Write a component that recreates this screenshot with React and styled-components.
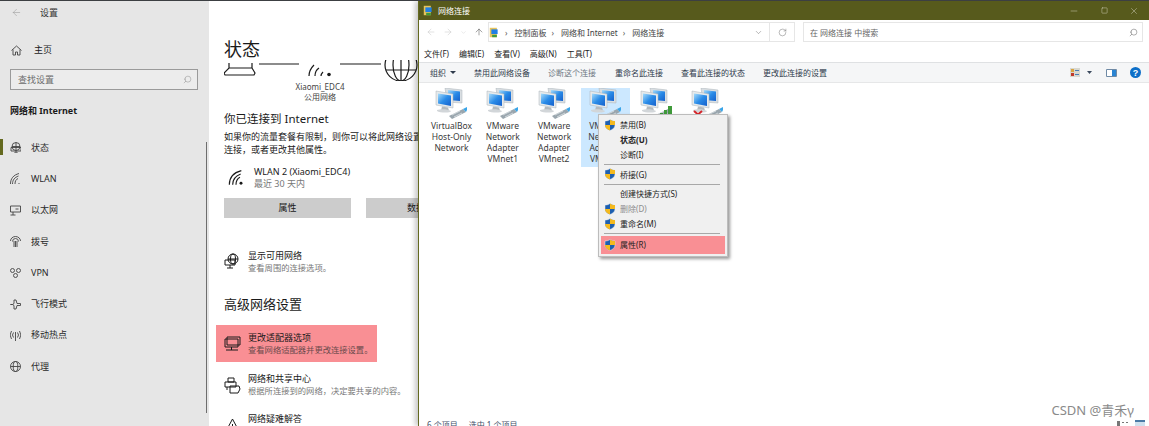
import styled, { createGlobalStyle } from "styled-components"
import { ArrowLeft, ArrowRight, ArrowUp, ChevronDown, Minus, RotateCw, Search, Square, X } from "lucide-react"

const cjk = `"Noto Sans", "Noto Sans CJK SC", sans-serif`

const Global = createGlobalStyle`
  html, body { margin: 0; padding: 0; background: #fff; }
  body { font-family: ${cjk}; overflow: hidden; }
  * { box-sizing: border-box; }
`

const Page = styled.div`
  display: flex;
  width: 1149px;
  height: 426px;
  overflow: hidden;
  border-top: 1px solid #3c3f42;
  color: #1a1a1a;
`

/* settings window, left part */
const Sidebar = styled.aside`
  position: relative;
  flex: 0 0 209px;
  background: #e6e6e6;
  font-size: 9px;
  line-height: 12px;
`

const BackRow = styled.div`
  display: flex;
  align-items: center;
  gap: 18px;
  height: 23px;
  padding-left: 11px;
  color: #333;
`

const HomeRow = styled.div`
  display: flex;
  align-items: center;
  gap: 12px;
  height: 20px;
  margin-top: 16px;
  padding-left: 11px;
`

const SearchBox = styled.div`
  display: flex;
  align-items: center;
  justify-content: space-between;
  width: 188px;
  height: 21px;
  margin: 9px 0 0 10px;
  padding: 0 5px 0 7px;
  border: 1px solid #9a9a9a;
  color: #6d6d6d;
  background: #ececec;
`

const GroupTitle = styled.div`
  margin: 15px 0 14px 10px;
  font-weight: 700;
  height: 13px;
`

const NavItem = styled.div`
  position: relative;
  display: flex;
  align-items: center;
  gap: 10px;
  height: 31.3px;
  padding-left: 10px;
  color: #2a2a2a;
  &::before {
    content: "";
    display: ${(p) => (p.$active ? "block" : "none")};
    position: absolute;
    left: 0;
    top: 7px;
    width: 3px;
    height: 16px;
    background: #64691f;
  }
`

const NavIcon = styled.svg`
  width: 11px;
  height: 11px;
  fill: none;
  stroke: #444;
  stroke-width: 0.9;
  flex: none;
`

const ScrollTrack = styled.div`
  position: absolute;
  right: 2px;
  top: 141px;
  width: 1px;
  height: 271px;
  background: #6e6e6e;
`

/* settings window, content */
const Content = styled.main`
  flex: 0 0 209px;
  padding-left: 15px;
  overflow: hidden;
  white-space: nowrap;
  font-size: 9px;
  line-height: 12px;
`

const Title = styled.h1`
  margin: 36px 0 0;
  height: 23px;
  font-size: 18px;
  line-height: 25px;
  font-weight: 400;
`

const Diagram = styled.svg`
  display: block;
  width: 194px;
  height: 21px;
  fill: none;
  stroke: #1a1a1a;
  stroke-width: 1.2;
`

const DiagramLabel = styled.div`
  width: 192px;
  text-align: center;
  font-size: 8px;
  line-height: 10px;
  color: #444;
  margin-top: ${(p) => p.$top || 0}px;
`

const ConnectedTitle = styled.h2`
  margin: 9px 0 0;
  font-size: 11.5px;
  line-height: 16px;
  font-weight: 400;
`

const Paragraph = styled.p`
  margin: 3px 0 0;
  font-size: 9px;
  line-height: 13px;
`

const NetRow = styled.div`
  display: flex;
  gap: 10px;
  margin: 9px 0 0 4px;
  height: 26px;
  align-items: center;
`

const Stack = styled.div`
  display: flex;
  flex-direction: column;
  line-height: 12px;
`

const Muted = styled.span`
  color: ${(p) => (p.$marked ? "#6b4a4c" : "#777")};
  font-size: ${(p) => (p.$small ? 8.3 : 9)}px;
`

const Buttons = styled.div`
  display: flex;
  gap: 15px;
  margin-top: 7px;
`

const GreyButton = styled.div`
  flex: none;
  width: 127px;
  height: 20px;
  line-height: 20px;
  text-align: center;
  background: #cccccc;
`

const LinkRow = styled.div`
  display: flex;
  align-items: center;
  gap: 7px;
  height: 37px;
  margin: ${(p) => p.$margin || "0"};
  padding-left: ${(p) => (p.$marked ? 8 : 0)}px;
  width: ${(p) => (p.$marked ? "161px" : "auto")};
  background: ${(p) => (p.$marked ? "#f98f94" : "transparent")};
`

const SectionTitle = styled.h2`
  margin: 15px 0 0;
  font-size: 13px;
  line-height: 18px;
  font-weight: 400;
`

const LinkIcon = styled.svg`
  width: 17px;
  height: 17px;
  fill: none;
  stroke: #1a1a1a;
  stroke-width: 1;
  flex: none;
`

/* explorer window */
const Explorer = styled.section`
  position: relative;
  flex: 1;
  display: flex;
  flex-direction: column;
  min-width: 0;
  background: #fff;
  border-left: 1px solid #64691f;
  box-shadow: -3px 0 5px rgba(0, 0, 0, 0.22);
  font-size: 8px;
  line-height: 11px;
`

const TitleBar = styled.header`
  display: flex;
  align-items: center;
  flex: none;
  height: 19px;
  padding-left: 4px;
  gap: 4px;
  color: #fff;
  background: #575a1c;
`

const WindowControls = styled.div`
  display: flex;
  align-items: center;
  margin-left: auto;
  color: #e8e8d8;
`

const WindowControl = styled.span`
  display: flex;
  justify-content: center;
  width: 30px;
`

const AddressRow = styled.div`
  display: flex;
  align-items: center;
  flex: none;
  height: 24px;
  padding: 2px 7px 2px 5px;
`

const NavArrows = styled.div`
  display: flex;
  align-items: center;
  flex: none;
  gap: 7px;
  width: 64px;
  padding-left: 2px;
  color: #c4c4c4;
`

const AddressBox = styled.div`
  display: flex;
  align-items: center;
  gap: 5px;
  flex: none;
  width: 282px;
  height: 20px;
  padding: 0 6px 0 0;
  border: 1px solid #e6e6e6;
  color: #444;
`

const Crumb = styled.span`
  &::before {
    content: "›";
    margin-right: 7px;
    color: #555;
  }
`

const RefreshBox = styled.div`
  display: flex;
  align-items: center;
  justify-content: center;
  flex: none;
  width: 25px;
  height: 20px;
  border: 1px solid #e6e6e6;
  border-left: 0;
  color: #666;
`

const SearchField = styled.div`
  display: flex;
  align-items: center;
  justify-content: space-between;
  flex: none;
  width: 340px;
  height: 20px;
  margin-left: 8px;
  padding: 0 4px 0 6px;
  border: 1px solid #e6e6e6;
  color: #666;
`

const MenuBar = styled.nav`
  display: flex;
  align-items: center;
  gap: 10px;
  flex: none;
  height: 18px;
  padding-left: 5px;
  color: #222;
`

const Toolbar = styled.div`
  display: flex;
  align-items: center;
  flex: none;
  height: 21px;
  padding-left: 11px;
  background: #f5f6f7;
  border-top: 1px solid #dfe1e3;
  border-bottom: 1px solid #e6e7e8;
  color: #2f3b4c;
`

const ToolItem = styled.span`
  display: flex;
  align-items: center;
  gap: 4px;
  width: ${(p) => p.$w}px;
  color: ${(p) => (p.$dim ? "#6d7683" : "#2f3b4c")};
`

const ToolIcons = styled.div`
  display: flex;
  align-items: center;
  gap: 13.5px;
  margin-left: auto;
  padding-right: 8px;
`

const IconGrid = styled.div`
  flex: 1;
  display: flex;
  align-items: flex-start;
  padding: 5px 0 0 8px;
  min-height: 0;
`

const FileItem = styled.div`
  flex: none;
  width: 49px;
  height: 79px;
  margin-right: 2.3px;
  text-align: center;
  font-size: 8.5px;
  line-height: 11px;
  color: #3a3a3a;
  background: ${(p) => (p.$selected ? "#cce8ff" : "transparent")};
`

const FileIcon = styled.svg`
  display: block;
  width: 33px;
  height: 32px;
  margin: 0 auto;
`

const StatusBar = styled.footer`
  flex: none;
  display: flex;
  gap: 11px;
  height: 6px;
  padding-left: 8px;
  color: #44506a;
  line-height: 10px;
  overflow: hidden;
`

const ContextMenu = styled.ul`
  position: absolute;
  left: 179px;
  top: 113px;
  width: 130px;
  margin: 0;
  padding: 2px;
  list-style: none;
  background: #f0f0f0;
  border: 1px solid #bcbcbc;
  box-shadow: 2px 2px 3px rgba(0, 0, 0, 0.4);
  color: #222;
`

const MenuEntry = styled.li`
  display: flex;
  align-items: center;
  gap: 4px;
  height: ${(p) => (p.$marked ? 18 : 15)}px;
  padding-left: 3px;
  font-weight: ${(p) => (p.$bold ? 700 : 400)};
  color: ${(p) => (p.$off ? "#8d8d8d" : "#222")};
  background: ${(p) => (p.$marked ? "#f98f94" : "transparent")};
`

const ShieldSlot = styled.span`
  flex: none;
  display: flex;
  width: 12px;
  height: 12px;
`

const MenuRule = styled.li`
  height: 1px;
  margin: 2px 5px 1.5px 3px;
  background: #a8a8a8;
`

const Watermark = styled.div`
  position: absolute;
  right: 15px;
  bottom: 8px;
  font-size: 13px;
  line-height: 16px;
  color: #8a8a8a;
`

const TrayGlyphs = styled.svg`
  position: absolute;
  right: 4px;
  bottom: 0;
  width: 28px;
  height: 6px;
`

function Wifi({ size = 16 }) {
  return (
    <svg width={size} height={size} viewBox="0 0 24 24" fill="none" stroke="#1a1a1a" strokeWidth="1.7">
      <circle cx="19.5" cy="20" r="2.2" fill="#1a1a1a" stroke="none" />
      <path d="M12 22C12 17 14 13 18 11" />
      <path d="M7 22C7 14 11 9 19 6" />
      <path d="M2 22C2 11 8 4 20 1" />
    </svg>
  )
}

const navIcons = {
  status: (
    <>
      <circle cx="6" cy="4.5" r="4" />
      <path d="M2 4.500h8M6 .5v8M1 5.500h10v3.500H1zM6 9v2M4 11h4" />
    </>
  ),
  wlan: <path d="M5 11C5 8 6 6.500 8 5.500M2.500 11C2.500 7 4.500 4.500 8.500 3M.5 11C.5 5.500 3.500 2 9 .5M8.500 10.500h1" />,
  ethernet: <path d="M.5 1h10v6H.5zM3 7v3M.5 10h5M5.500 4h3" />,
  dial: <path d="M.5 5a5 4.500 0 0 1 10 0M2.500 5.500a3 3 0 0 1 6 0M4 5v6M5.500 5v6M7 5v6" />,
  vpn: (
    <>
      <circle cx="2.500" cy="3.500" r="2" />
      <circle cx="8.500" cy="3.500" r="2" />
      <circle cx="5.500" cy="8.500" r="2" />
    </>
  ),
  plane: <path d="M.5 5.500h2l1.500-1V1h2l1 3.500h3.500v2H7l-1 3.500H4V6.500l-1.500-1z" />,
  hotspot: <path d="M5.500 2v9M3.500 2.500a4 4 0 0 0 0 5M7.500 2.500a4 4 0 0 1 0 5M1.500 1a7 7 0 0 0 0 8M9.500 1a7 7 0 0 1 0 8" />,
  proxy: (
    <>
      <circle cx="5.500" cy="5.500" r="5" />
      <ellipse cx="5.500" cy="5.500" rx="2.300" ry="5" />
      <path d="M.5 5.500h10" />
    </>
  ),
}

const navItems = [
  ["status", "状态", true],
  ["wlan", "WLAN"],
  ["ethernet", "以太网"],
  ["dial", "拨号"],
  ["vpn", "VPN"],
  ["plane", "飞行模式"],
  ["hotspot", "移动热点"],
  ["proxy", "代理"],
]

function Monitors({ badge }) {
  return (
    <FileIcon viewBox="0 0 33 32">
      <defs>
        <linearGradient id="screen" x1="0" y1="0" x2="1" y2="1">
          <stop offset="0" stopColor="#a6dcfb" />
          <stop offset="0.5" stopColor="#2a8ce8" />
          <stop offset="1" stopColor="#1560cc" />
        </linearGradient>
      </defs>
      <path d="M10 0l17 2v13l-15-1z" fill="#d9dee2" stroke="#a9b2b8" strokeWidth=".5" />
      <path d="M13 2l12 1.500V13l-12-1z" fill="url(#screen)" />
      <path d="M1 3l17 3v14L1 17z" fill="#e6eaec" stroke="#a9b2b8" strokeWidth=".5" />
      <path d="M3 5.500l13 2V18L3 15.500z" fill="url(#screen)" />
      <path d="M7 18.500l6 1 1 3H6z" fill="#b4babe" />
      <path d="M2 22c3-1 11-1 14 1 0 2-11 2-14 0z" fill="#d2d6d9" />
      <path d="M14 28l14-7 3 3-14 7z" fill="#9aa6ae" />
      <path d="M17 27l8-4M19 29l8-4" stroke="#dfe4e7" strokeWidth=".8" />
      <path d="M28 21l4-2v3l-1 2z" fill="#3aa5e8" />
      {badge === "bars" && <path d="M20 30v-5h3v5zM24 30v-8h3v8zM28 30V18h4v12z" fill="#3f9a3a" />}
      {badge === "cross" && <path d="M3 23l8 7M11 23l-8 7" stroke="#d6262b" strokeWidth="2" />}
    </FileIcon>
  )
}

function Shield() {
  return (
    <svg width="12" height="12" viewBox="0 0 12 12">
      <path d="M6 .5c1.500 1 3 1.500 5 1.500v4c0 3-2.500 4.500-5 5.500C3.500 10.500 1 9 1 6V2c2 0 3.500-.5 5-1.500z" fill="#1d5fb0" stroke="#e8eef5" strokeWidth=".5" />
      <path d="M6 .5V6h5V2C9 2 7.500 1.500 6 .5zM6 6H1c0 3 2.500 4.500 5 5.500z" fill="#f4b91e" />
    </svg>
  )
}

function NetFolder() {
  return (
    <svg width="11" height="11" viewBox="0 0 14 14">
      <path d="M1 1h9v12H1z" fill="#e6c35c" />
      <path d="M3 3h8v6H3z" fill="#1f7fe4" />
      <path d="M4 10h6v3H4z" fill="#3f9a3a" />
    </svg>
  )
}

const files = [
  { lines: ["VirtualBox", "Host-Only", "Network"] },
  { lines: ["VMware", "Network", "Adapter", "VMnet1"] },
  { lines: ["VMware", "Network", "Adapter", "VMnet2"] },
  { lines: ["VMware", "Network", "Adapter", "VMnet8"], selected: true },
  { lines: [], badge: "bars" },
  { lines: [], badge: "cross" },
]

export default function App() {
  return (
    <>
      <Global />
      <Page>
        <Sidebar>
          <BackRow>
            <ArrowLeft size={11} strokeWidth={1} color="#8a8a8a" />
            <span>设置</span>
          </BackRow>
          <HomeRow>
            <NavIcon viewBox="0 0 11 11">
              <path d="M.5 5.500L5.500 1l5 4.500M2 4.500V10h2.500V7h2v3H9V4.500" />
            </NavIcon>
            <span>主页</span>
          </HomeRow>
          <SearchBox>
            <span>查找设置</span>
            <Search size={9} strokeWidth={1} style={{ transform: "scaleX(-1)" }} />
          </SearchBox>
          <GroupTitle>网络和 Internet</GroupTitle>
          {navItems.map(([icon, label, active]) => (
            <NavItem key={label} $active={active}>
              <NavIcon viewBox="0 0 11 11">{navIcons[icon]}</NavIcon>
              <span>{label}</span>
            </NavItem>
          ))}
          <ScrollTrack />
        </Sidebar>

        <Content>
          <Title>状态</Title>
          <Diagram viewBox="0 0 194 21">
            <path d="M5 3v5M28 3v5M5 8h23l3 5-1 2H1l-1-2z" />
            <path d="M35 4h40M116 4h41" />
            <path d="M85 16c0-4 2-8 5-11M91 16c0-3 1-6 4-8M97 16c0-2 1-3 2-4" />
            <circle cx="105" cy="14.500" r="1.800" fill="#1a1a1a" stroke="none" />
            <circle cx="177" cy="5" r="16" />
            <ellipse cx="177" cy="5" rx="8" ry="16" />
            <path d="M162 10h30M177 0v21" />
          </Diagram>
          <DiagramLabel $top={1}>Xiaomi_EDC4</DiagramLabel>
          <DiagramLabel>公用网络</DiagramLabel>
          <ConnectedTitle>你已连接到 Internet</ConnectedTitle>
          <Paragraph>
            如果你的流量套餐有限制，则你可以将此网络设置为按流量计费的
            <br />
            连接，或者更改其他属性。
          </Paragraph>
          <NetRow>
            <Wifi />
            <Stack>
              <span>WLAN 2 (Xiaomi_EDC4)</span>
              <Muted>最近 30 天内</Muted>
            </Stack>
          </NetRow>
          <Buttons>
            <GreyButton>属性</GreyButton>
            <GreyButton>数据使用量</GreyButton>
          </Buttons>
          <LinkRow $margin="25px 0 0">
            <LinkIcon viewBox="0 0 17 17">
              <circle cx="9" cy="6" r="5" />
              <ellipse cx="9" cy="6" rx="2.500" ry="5" />
              <path d="M4 6h10M1 7h10v5H1zM6 12v3M3 15h6" />
            </LinkIcon>
            <Stack>
              <span>显示可用网络</span>
              <Muted $small>查看周围的连接选项。</Muted>
            </Stack>
          </LinkRow>
          <SectionTitle>高级网络设置</SectionTitle>
          <LinkRow $marked $margin="12px 0 0 -8px">
            <LinkIcon viewBox="0 0 17 17">
              <path d="M3 2h13v8H3zM1 4h13v8H1zM7.500 12v2M2 15h12M7.500 14v1" fill="#f98f94" />
            </LinkIcon>
            <Stack>
              <span>更改适配器选项</span>
              <Muted $small $marked>查看网络适配器并更改连接设置。</Muted>
            </Stack>
          </LinkRow>
          <LinkRow $margin="4.5px 0 0">
            <LinkIcon viewBox="0 0 17 17">
              <path d="M4 1h6v4H4zM1 5h11v5H1zM3 10v3M6 9h9l1 3-2 4H6z" />
            </LinkIcon>
            <Stack>
              <span>网络和共享中心</span>
              <Muted $small>根据所连接到的网络，决定要共享的内容。</Muted>
            </Stack>
          </LinkRow>
          <LinkRow $margin="3px 0 0">
            <LinkIcon viewBox="0 0 17 17">
              <path d="M8.500 2L1 16h15zM8.500 7v5M8.500 13v1" />
            </LinkIcon>
            <Stack>
              <span>网络疑难解答</span>
              <Muted $small>诊断并解决网络问题。</Muted>
            </Stack>
          </LinkRow>
        </Content>

        <Explorer>
          <TitleBar>
            <NetFolder />
            <span>网络连接</span>
            <WindowControls>
              <WindowControl><Minus size={10} strokeWidth={1} /></WindowControl>
              <WindowControl><Square size={7} strokeWidth={1.4} /></WindowControl>
              <WindowControl><X size={10} strokeWidth={1} /></WindowControl>
            </WindowControls>
          </TitleBar>

          <AddressRow>
            <NavArrows>
              <ArrowLeft size={10} strokeWidth={1.2} />
              <ArrowRight size={10} strokeWidth={1.2} />
              <ChevronDown size={7} strokeWidth={1.2} />
              <ArrowUp size={10} strokeWidth={1.2} color="#444" />
            </NavArrows>
            <AddressBox>
              <NetFolder />
              <Crumb>控制面板</Crumb>
              <Crumb>网络和 Internet</Crumb>
              <Crumb>网络连接</Crumb>
              <ChevronDown size={9} strokeWidth={1} style={{ marginLeft: "auto" }} />
            </AddressBox>
            <RefreshBox><RotateCw size={9} strokeWidth={1.2} /></RefreshBox>
            <SearchField>
              <span>在 网络连接 中搜索</span>
              <Search size={9} strokeWidth={1.4} style={{ transform: "scaleX(-1)" }} />
            </SearchField>
          </AddressRow>

          <MenuBar>
            <span>文件(F)</span>
            <span>编辑(E)</span>
            <span>查看(V)</span>
            <span>高级(N)</span>
            <span>工具(T)</span>
          </MenuBar>

          <Toolbar>
            <ToolItem $w={44}>组织 <svg width="6" height="4" viewBox="0 0 6 4"><path d="M0 0h6L3 3z" fill="#2f3b4c" /></svg></ToolItem>
            <ToolItem $w={74}>禁用此网络设备</ToolItem>
            <ToolItem $w={67} $dim>诊断这个连接</ToolItem>
            <ToolItem $w={66}>重命名此连接</ToolItem>
            <ToolItem $w={82}>查看此连接的状态</ToolItem>
            <ToolItem $w={80}>更改此连接的设置</ToolItem>
            <ToolIcons>
              <svg width="22" height="9" viewBox="0 0 22 9">
                <path d="M0 0h10v9H0z" fill="#d8d8d0" />
                <path d="M1 1h3v3H1z" fill="#d9a441" />
                <path d="M1 5h3v3H1z" fill="#c0392b" />
                <path d="M5 2h4v1H5zM5 6h4v1H5z" fill="#4a7fb5" />
                <path d="M17 3h5l-2.500 3z" fill="#3b4a5e" />
              </svg>
              <svg width="11" height="8" viewBox="0 0 11 8">
                <path d="M.5.500h10v7H.5z" fill="#fff" stroke="#6f8aa5" />
                <path d="M6 1h4v6H6z" fill="#2a84d2" />
              </svg>
              <svg width="11" height="11" viewBox="0 0 11 11">
                <circle cx="5.500" cy="5.500" r="5.500" fill="#0d6fc8" />
                <text x="5.500" y="8.800" textAnchor="middle" fontSize="9" fontWeight="700" fill="#fff" fontFamily="Liberation Sans, sans-serif">?</text>
              </svg>
            </ToolIcons>
          </Toolbar>

          <IconGrid>
            {files.map((f, i) => (
              <FileItem key={i} $selected={f.selected}>
                <Monitors badge={f.badge} />
                {f.lines.map((l) => <div key={l}>{l}</div>)}
              </FileItem>
            ))}
          </IconGrid>

          <StatusBar>
            <span>6 个项目</span>
            <span>选中 1 个项目</span>
          </StatusBar>

          <ContextMenu>
            <MenuEntry><ShieldSlot><Shield /></ShieldSlot>禁用(B)</MenuEntry>
            <MenuEntry $bold><ShieldSlot />状态(U)</MenuEntry>
            <MenuEntry><ShieldSlot />诊断(I)</MenuEntry>
            <MenuRule />
            <MenuEntry><ShieldSlot><Shield /></ShieldSlot>桥接(G)</MenuEntry>
            <MenuRule />
            <MenuEntry><ShieldSlot />创建快捷方式(S)</MenuEntry>
            <MenuEntry $off><ShieldSlot><Shield /></ShieldSlot>删除(D)</MenuEntry>
            <MenuEntry><ShieldSlot><Shield /></ShieldSlot>重命名(M)</MenuEntry>
            <MenuRule />
            <MenuEntry $marked><ShieldSlot><Shield /></ShieldSlot>属性(R)</MenuEntry>
          </ContextMenu>

          <Watermark>CSDN @青禾γ</Watermark>
          <TrayGlyphs viewBox="0 0 28 6">
            <path d="M0 1h3v5H0zM5 2h2v1H5zM9 2h2v1H9z" fill="#777" />
            <path d="M18 0h10v6H18z" fill="#cfe0ee" />
            <path d="M18 0h10v2H18z" fill="#4b7aa6" />
          </TrayGlyphs>
        </Explorer>
      </Page>
    </>
  )
}
